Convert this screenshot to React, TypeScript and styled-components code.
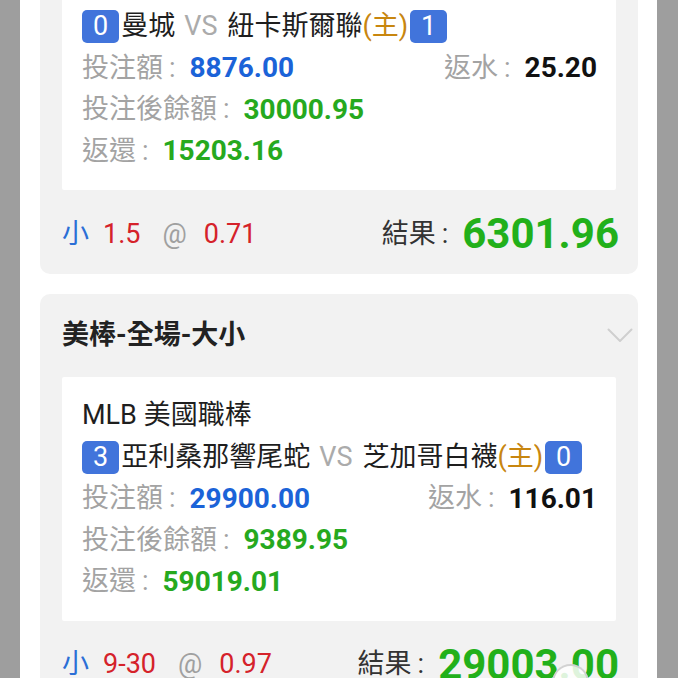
import React from "react";
import styled, { createGlobalStyle } from "styled-components";

const GlobalStyle = createGlobalStyle`
  html, body {
    margin: 0;
    padding: 0;
  }
  body {
    background: #9e9e9e;
    font-family: Roboto, "Noto Sans CJK TC", "Noto Sans", sans-serif;
    -webkit-font-smoothing: antialiased;
  }
  * { box-sizing: border-box; }
`;

const Page = styled.div`
  margin: 0 21px 0 20px;
  min-height: 100vh;
  background: #ffffff;
  padding: 0 19px 60px 20px;
  display: flex;
  flex-direction: column;
  gap: 20px;
`;

const Card = styled.section<{ $cut?: boolean }>`
  background: #f2f2f2;
  border-radius: ${(p) => (p.$cut ? "0 0 10px 10px" : "10px")};
  padding: 0 22px;
`;

const Header = styled.header`
  height: 83px;
  margin-right: -17px;
  display: flex;
  align-items: center;
  justify-content: space-between;
  font-size: 27px;
  font-weight: 700;
  color: #222222;
  line-height: 1;
`;

const Ticket = styled.div<{ $cut?: boolean }>`
  background: #ffffff;
  border-radius: ${(p) => (p.$cut ? "0 0 2px 2px" : "2px")};
  padding: ${(p) => (p.$cut ? "6px" : "18px")} 19px 18px 20px;
  display: flex;
  flex-direction: column;
`;

const Row = styled.div`
  height: 41.5px;
  display: flex;
  align-items: center;
  justify-content: space-between;
  white-space: nowrap;
  line-height: 1;
`;

const League = styled.div`
  height: 41.5px;
  display: flex;
  align-items: center;
  font-size: 27px;
  color: #1e1e1e;
  white-space: nowrap;
  line-height: 1;
`;

const Teams = styled.div`
  height: 41.5px;
  display: flex;
  align-items: center;
  font-size: 27px;
  color: #1e1e1e;
  white-space: nowrap;
  line-height: 1;
`;

const Score = styled.span<{ $side: "home" | "away" }>`
  display: inline-flex;
  align-items: center;
  justify-content: center;
  height: 33px;
  min-width: 37px;
  padding: 0 11px;
  border-radius: 5px;
  background: #4174db;
  color: #ffffff;
  font-size: 27px;
  margin: ${(p) => (p.$side === "home" ? "0 2px 0 0" : "0 0 0 2px")};
`;

const Versus = styled.span`
  color: #ababab;
  margin: 0 10px 0 9px;
`;

const Host = styled.span`
  color: #c8860f;
`;

const Field = styled.span`
  display: inline-flex;
  align-items: center;
`;

const Label = styled.span`
  font-size: 27px;
  color: #a3a3a3;
`;

const Colon = styled.span<{ $color?: string }>`
  font-size: 27px;
  color: ${(p) => p.$color ?? "#a3a3a3"};
  margin: 0 14px 0 6px;
`;

const Value = styled.span<{ $color: string }>`
  font-size: 28px;
  font-weight: 700;
  color: ${(p) => p.$color};
`;

const Footer = styled.footer`
  height: 84px;
  padding-top: 4px;
  margin-right: -3px;
  display: flex;
  align-items: center;
  justify-content: space-between;
  white-space: nowrap;
  line-height: 1;
`;

const Bet = styled.div`
  display: flex;
  align-items: center;
  font-size: 27px;
`;

const BetPart = styled.span<{ $color: string; $gap: number }>`
  color: ${(p) => p.$color};
  margin-right: ${(p) => p.$gap}px;
`;

const Result = styled.div`
  display: flex;
  align-items: center;
`;

const ResultLabel = styled.span`
  font-size: 27px;
  color: #333333;
`;

const ResultValue = styled.span`
  font-size: 42px;
  font-weight: 700;
  color: #22b01a;
`;

const FloatButton = styled.div`
  position: fixed;
  left: 552px;
  top: 664px;
  width: 37px;
  height: 37px;
  border-radius: 50%;
  border: 2px solid rgba(205, 205, 205, 0.9);
  background: rgba(255, 255, 255, 0.85);
`;

const Chevron = () => (
  <svg width="26" height="15" viewBox="0 0 26 15" fill="none">
    <polyline
      points="1.5,1.5 13,13 24.5,1.5"
      stroke="#cfcfcf"
      strokeWidth="2"
      strokeLinecap="round"
      strokeLinejoin="round"
    />
  </svg>
);

type BetInfo = {
  league?: string;
  homeScore: string;
  home: string;
  away: string;
  awayScore: string;
  stake: string;
  rebate: string;
  balance: string;
  refund: string;
  side: string;
  line: string;
  odds: string;
  result: string;
};

const Item = ({ label, value, color }: { label: string; value: string; color: string }) => (
  <Field>
    <Label>{label}</Label>
    <Colon>:</Colon>
    <Value $color={color}>{value}</Value>
  </Field>
);

const TicketBody = ({ b, cut }: { b: BetInfo; cut?: boolean }) => (
  <Ticket $cut={cut}>
    {b.league && <League>{b.league}</League>}
    <Teams>
      <Score $side="home">{b.homeScore}</Score>
      {b.home}
      <Versus>VS</Versus>
      {b.away}
      <Host>(主)</Host>
      <Score $side="away">{b.awayScore}</Score>
    </Teams>
    <Row>
      <Item label="投注額" value={b.stake} color="#1b63d8" />
      <Item label="返水" value={b.rebate} color="#111111" />
    </Row>
    <Row>
      <Item label="投注後餘額" value={b.balance} color="#26a91e" />
    </Row>
    <Row>
      <Item label="返還" value={b.refund} color="#26a91e" />
    </Row>
  </Ticket>
);

const BetFooter = ({ b }: { b: BetInfo }) => (
  <Footer>
    <Bet>
      <BetPart $color="#2b6fd6" $gap={14}>{b.side}</BetPart>
      <BetPart $color="#d5222a" $gap={22}>{b.line}</BetPart>
      <BetPart $color="#a0a0a0" $gap={17}>@</BetPart>
      <BetPart $color="#d5222a" $gap={0}>{b.odds}</BetPart>
    </Bet>
    <Result>
      <ResultLabel>結果</ResultLabel>
      <Colon $color="#333333">:</Colon>
      <ResultValue>{b.result}</ResultValue>
    </Result>
  </Footer>
);

const first: BetInfo = {
  homeScore: "0",
  home: "曼城",
  away: "紐卡斯爾聯",
  awayScore: "1",
  stake: "8876.00",
  rebate: "25.20",
  balance: "30000.95",
  refund: "15203.16",
  side: "小",
  line: "1.5",
  odds: "0.71",
  result: "6301.96",
};

const second: BetInfo = {
  league: "MLB 美國職棒",
  homeScore: "3",
  home: "亞利桑那響尾蛇",
  away: "芝加哥白襪",
  awayScore: "0",
  stake: "29900.00",
  rebate: "116.01",
  balance: "9389.95",
  refund: "59019.01",
  side: "小",
  line: "9-30",
  odds: "0.97",
  result: "29003.00",
};

export default function App() {
  return (
    <>
      <GlobalStyle />
      <Page>
        <Card $cut>
          <TicketBody b={first} cut />
          <BetFooter b={first} />
        </Card>
        <Card>
          <Header>
            <span>美棒-全場-大小</span>
            <Chevron />
          </Header>
          <TicketBody b={second} />
          <BetFooter b={second} />
        </Card>
      </Page>
      <FloatButton />
    </>
  );
}
